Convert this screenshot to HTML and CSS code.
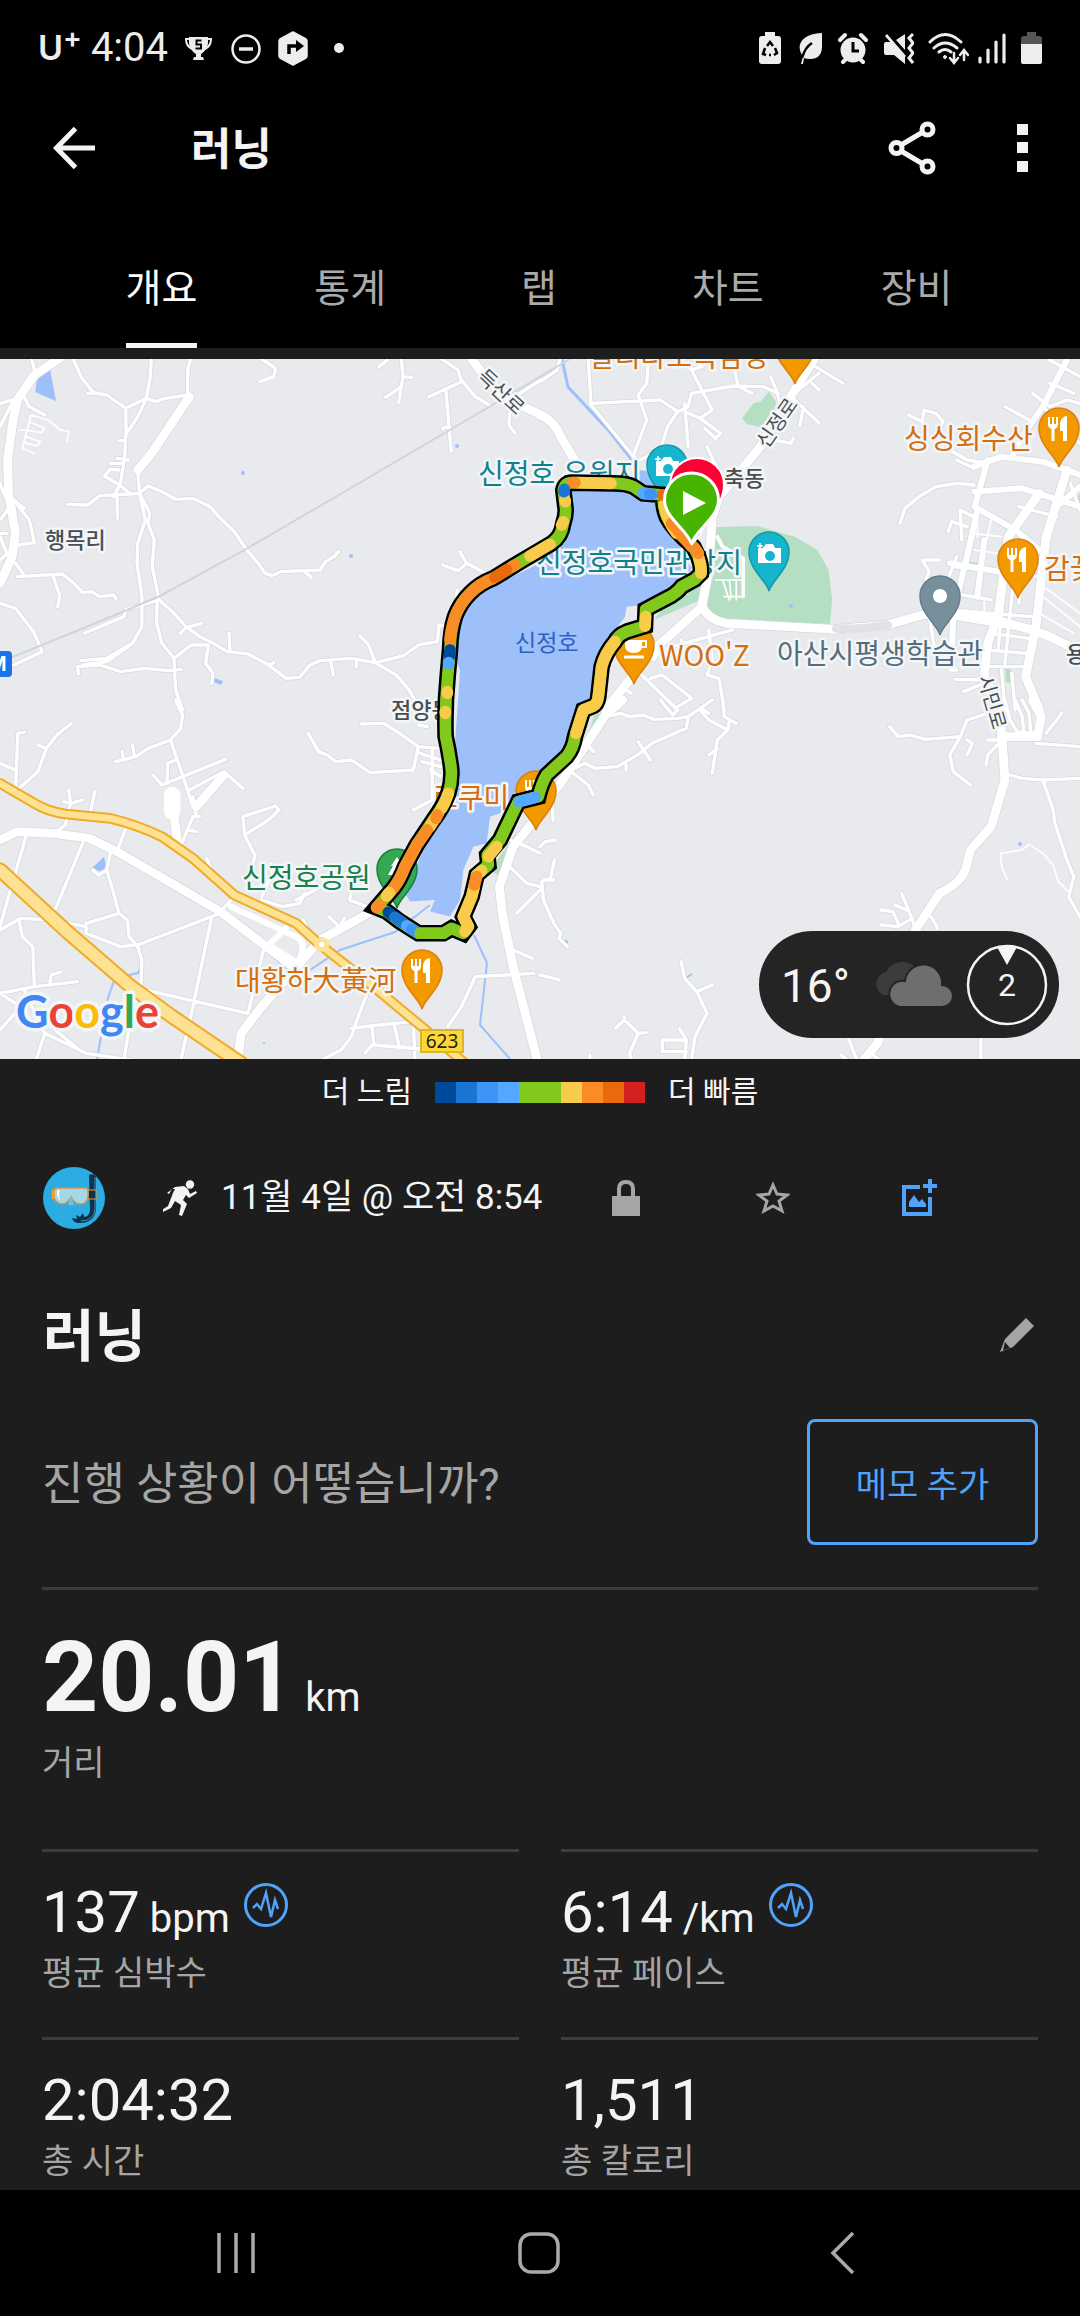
FILE: index.html
```html
<!DOCTYPE html>
<html lang="ko">
<head>
<meta charset="utf-8">
<meta name="viewport" content="width=device-width, initial-scale=1">
<title>러닝</title>
<link rel="stylesheet" href="styles.css">
</head>
<body>
<div class="app">
  <header class="top">
    <div class="status">
      <div class="status-left">
        <span class="carrier">U<span class="carrier-plus">+</span></span>
        <span class="clock">4:04</span>
        <svg class="ic-trophy" width="27" height="36" viewBox="0 0 27 36" fill="#ededed"><path d="M4 7h19v5c0 6-4 10-7 12v3h2l1 3H8l1-3h2v-3C8 22 4 18 4 12z"/><path d="M5 9H1c0 5 2 8 6 10M22 9h4c0 5-2 8-6 10" fill="none" stroke="#ededed" stroke-width="2"/><path d="M16.500 10.500h-5v4h4.500v4h-5.500" fill="none" stroke="#000" stroke-width="2"/></svg>
        <svg class="ic-dnd" width="30" height="36" viewBox="0 0 30 36" fill="none" stroke="#ededed"><circle cx="15" cy="19" r="13.500" stroke-width="2.500"/><path d="M8 19h14" stroke-width="3.500"/></svg>
        <svg class="ic-nav" width="30" height="36" viewBox="0 0 30 36"><path d="M15 2l13 7q1 1 1 2v15q0 1-1 2l-13 7-13-7q-1-1-1-2V11q0-1 1-2z" fill="#ededed" stroke="#ededed" stroke-width="1.500" stroke-linejoin="round"/><path d="M11 24v-8h8" fill="none" stroke="#000" stroke-width="3.500"/><path d="M18 10l8 6-8 6z"/></svg>
        <svg class="ic-dot" width="10" height="36" viewBox="0 0 10 36"><circle cx="5" cy="18" r="5" fill="#ededed"/></svg>
      </div>
      <div class="status-right">
        <svg class="g17" width="22" height="36" viewBox="0 0 22 36"><path d="M6 2h10v4h3q3 0 3 3v22q0 3-3 3H3q-3 0-3-3V9q0-3 3-3h3z" fill="#ededed"/><path d="M8 16l3-4 3 4M16 18l2 5-3 2M12 25l-2 0M7 25l-3-1 2-6" fill="none" stroke="#000" stroke-width="2.500"/></svg>
        <svg class="g16" width="24" height="36" viewBox="0 0 24 36"><path d="M24 3v13q0 13-12 13-4 0-6-1l-1 6H3l2-8C-2 18 1 4 24 3z" fill="#ededed"/><path d="M14 13C9 16 6 21 4 28" fill="none" stroke="#000" stroke-width="2.500"/></svg>
        <svg class="g16" width="30" height="36" viewBox="0 0 30 36"><circle cx="15" cy="20" r="12.500" fill="#ededed"/><path d="M2 10l5-5M28 10l-5-5M5 32l4-4M25 32l-4-4" stroke="#ededed" stroke-width="4" stroke-linecap="round"/><path d="M15 12v9h6" fill="none" stroke="#000" stroke-width="3"/></svg>
        <svg class="g14" width="30" height="36" viewBox="0 0 30 36"><path d="M0 14q0-2 2-2h6l13 14v8L10 25H2q-2 0-2-2zM12 10l9-6v16zM1 6l2-2 19 22-2 2z" fill="#ededed"/><path d="M29 4l-4 4 4 5-4 5 4 5-4 5 4 5" fill="none" stroke="#ededed" stroke-width="3"/></svg>
        <svg class="g9" width="41" height="36" viewBox="0 0 41 36" fill="none" stroke="#ededed" stroke-linecap="round"><path d="M2 12Q17-3 33 12M6 18q11-10 23 0M11 22q6-5 12 0" stroke-width="3"/><circle cx="17" cy="27" r="1.500" fill="#ededed" stroke-width="1"/><path d="M26 23v9m-4-4l4 5 4-5M36 30v-9m-4 4l4-5 4 5" stroke-width="2.500"/></svg>
        <svg class="g15" width="28" height="36" viewBox="0 0 28 36" stroke="#ededed" stroke-width="3.200" stroke-linecap="round"><path d="M2 28v4M10 20v12M18 12v20M26 5v27"/></svg>
        <svg width="21" height="36" viewBox="0 0 21 36"><path d="M6 2h9v4h3q3 0 3 3v5H0V9q0-3 3-3h3z" fill="#555"/><path d="M0 14h21v18q0 2-3 2H3q-3 0-3-2z" fill="#ededed"/></svg>
      </div>
    </div>
    <div class="appbar">
      <button class="iconbtn" aria-label="뒤로"><svg width="42" height="42" viewBox="0 0 42 42" fill="none" stroke="#f4f4f4" stroke-width="5"><path d="M42 21H4M22.500 1.500L3.500 21l19 19.500"/></svg></button>
      <h1 class="appbar-title">러닝</h1>
      <button class="iconbtn" aria-label="공유"><svg width="48" height="54" viewBox="0 0 48 54" fill="none" stroke="#f4f4f4" stroke-width="5"><circle cx="8.500" cy="27" r="5.500"/><circle cx="39.500" cy="8.500" r="5.500"/><circle cx="39.500" cy="45.500" r="5.500"/><path d="M13 24l22-13M13 30l22 13"/></svg></button>
      <button class="iconbtn" aria-label="더보기"><svg width="11" height="48" viewBox="0 0 11 48" fill="#f4f4f4"><path d="M0 0h11v11H0zM0 18h11v11H0zM0 37h11v11H0z"/></svg></button>
    </div>
    <nav class="tabs">
      <a class="tab active" href="#overview">개요</a>
      <a class="tab" href="#stats">통계</a>
      <a class="tab" href="#laps">랩</a>
      <a class="tab" href="#charts">차트</a>
      <a class="tab" href="#gear">장비</a>
    </nav>
  </header>

  <main>
    <section class="map">
      <svg class="map-svg" viewBox="0 359 1080 700" preserveAspectRatio="xMidYMid slice">
        <defs>
          <g id="pin"><path d="M0 39C-2 29-20 18-20 0A20 20 0 1 1 20 0C20 18 2 29 0 39z" stroke-width="1.500"/></g>
          <g id="food" fill="#f29900" stroke="#dd7f0a"><use href="#pin"/><g fill="#fff" stroke="none"><path d="M-11-11h2v7h2v-7h2v7h2v-7h2V-4q0 4-3.500 5V13h-3V1Q-11 0-11-4zM8-12V13H4V3H1V-5q1-6 7-7z"/></g></g>
          <g id="camera" fill="#15b5ce" stroke="#1497a5"><use href="#pin"/><g stroke="none"><path fill="#fff" d="M-11-4h5l3-4h7l2 4h6V11h-23z"/><circle cx="1" cy="4" r="5"/><path d="M-9-9v6m-3-3h6" stroke="#fff" stroke-width="1.500"/></g></g>
          <path id="track" d="M940 290L955 320Q965 350 963 370L945 388L905 410Q890 430 860 445L797 478L795 528L740 545Q715 555 705 575Q675 610 665 650L655 740Q652 762 640 768L610 780L585 860Q580 895 560 920L500 975Q485 1000 475 1040L415 1055L360 1170L322 1215L325 1245L290 1275L275 1340L250 1400L265 1430L250 1450L215 1435L190 1450L115 1450L60 1415L20 1385L-10 1373L40 1315Q60 1290 75 1250L110 1185L160 1110Q190 1070 205 1030Q218 990 213 950Q206 900 197 860Q194 770 203 680L210 600Q212 540 225 500Q240 460 270 430Q300 400 340 385L430 330L515 280Q545 260 550 220Q560 190 556 170L550 120Q555 98 575 98L700 100Q740 100 760 110L790 130L850 135Q848 170 860 200Q880 240 940 290"/>

          <!-- north-west quarter -->
          <g id="nw-small">
            <path d="M210 20L235 80L270 127L310 135L365 175L366 240L362 320L350 400M440 20L435 90L425 145L365 175M555 20L545 60L545 135L480 145L450 155L425 145L400 200L368 250M345 272H360M255 130H275"/>
            <path d="M340 325L372 330M320 340H355M345 360L320 358L303 378L340 400L380 432M350 400L330 440M405 430L375 432L290 437L255 465L195 463M340 440L341 505"/>
            <path d="M405 430L430 408L470 425L510 448L560 445L610 470L640 505L680 545L720 605L750 640L770 670L790 677L815 665L930 660L945 635L970 620L983 605M885 665L905 683"/>
            <path d="M50 680L180 672L215 700L240 728L265 725L290 740L330 735L337 747M155 680L173 735L168 770M45 640L70 675M0 760L45 775L75 815L100 850L122 905L40 945M245 850L360 800L365 778L462 750"/>
            <path d="M462 750L500 785L540 830L580 860L615 878L660 905L720 912L780 945L830 985L870 982L900 945L930 932L1020 925L1090 938L1170 918L1215 885L1270 875L1275 825L1290 828M585 820L540 833L523 850M665 850L668 905M780 945L795 938M960 935L968 975M1035 930V950"/>
            <path d="M1045 857L1070 885L1090 938L1150 975L1185 1015L1205 1050M456 760L455 820L470 880L505 925L510 1020L530 1080M228 972L225 950L290 945L350 965L420 955L490 962L525 958M505 925L555 885L605 885L597 940L618 970L615 1000"/>
            <path d="M0 160L35 150M0 230L40 150M70 140L85 170L130 195M70 475L40 450L85 510L100 578L55 585M0 400L15 440M0 510L30 470M0 550H20M0 560L20 610M0 630L45 590M90 20L100 60"/>
            <path d="M1100 50L1125 30M1165 20L1170 80L1165 110L1120 142M1165 110L1158 158M1170 80L1195 82M1280 25L1330 60L1340 95L1245 140M1295 125L1310 305M1285 235L1305 230M1340 90L1380 140L1420 165M1480 190L1478 225L1495 250M1510 130L1570 90M1285 645L1330 662L1355 640L1410 670M1335 605L1355 640M1328 720L1325 740M750 20L800 55L795 80L755 95"/>
            <path d="M400 360L405 430L422 510L400 580L398 640L412 740L412 830L385 880L310 925L235 932M405 430L435 490L430 520L448 570L442 650L462 750M385 880L310 935L240 945"/>
          </g>
          <path id="nw-big" d="M180 20L100 75L50 150L35 230L22 330L25 430L45 550L35 620L0 700M550 140L440 310L400 360M1365 20L1400 70L1470 145L1570 195"/>

          <!-- north-east quarter -->
          <g id="ne-small">
            <path d="M140 20L148 165L280 330M148 160L350 150L400 185L430 170L440 130L560 108L650 110L690 130M315 30L310 100L285 135L310 210L270 320M400 20L440 60L500 180L465 205M440 20L470 50L440 60M565 60L575 108L615 130M0 95L50 60L60 20"/>
            <path d="M400 185L370 230L350 300L290 330M420 160L430 290M430 190L465 205L525 250L510 265L478 235M485 290L520 370M670 80L690 130L700 180M740 150L780 190L810 218M755 225L765 170M800 50L880 100M790 100L810 120M750 120L810 70M680 270L730 280L735 265"/>
            <path d="M1480 30L1568 80M1460 170L1568 280M1350 170L1420 210M1430 130L1480 170L1530 150L1568 160M1480 100L1550 130M1070 195L1110 215L1115 180L1150 190L1170 215L1160 240L1190 300L1240 330L1300 340M1210 330L1260 355M1045 520L1060 475L1100 440L1150 410L1210 400L1260 405"/>
            <path d="M1260 500L1220 480L1225 570M1195 515L1240 530M1185 545L1195 515M1200 650L1450 680M1210 620L1180 700M1110 630L1130 665L1120 690M1120 630H1160M1200 730L1310 750M1190 780L1430 800M1350 680L1330 900M1375 690L1350 940M1400 690L1390 760M1310 850L1420 865M1300 900L1410 910M1300 950L1410 950M1340 960L1350 1080M1370 970L1380 1080M1400 560L1390 640M1390 470L1500 500M1540 400L1568 480M1205 988L1280 990M1230 1025L1290 1000M1130 800L1145 890M1190 960H1210"/>
            <path d="M290 970L400 1080M320 985L355 975L440 1045M350 880L300 950M560 840L350 900L330 930M420 900L410 870M490 840L500 930L485 975L520 985L535 1080M515 560L530 590L590 625L590 740M440 1045L400 1070M250 1020L265 1030"/>
          </g>
          <path id="ne-mid" d="M1530 30L1460 170L1400 260L1370 320M1260 350L1340 320L1460 335L1568 375M1300 330L1262 470L1380 540L1450 600M1262 425L1400 415L1568 470M1270 480L1240 620L1200 790L1195 940M1190 640L1330 665M1200 800L1430 840M1290 570L1270 740M1500 470L1568 410"/>
          <path id="ne-big" d="M0 195Q40 210 60 260L100 330M800 20L740 120L640 290L520 440L500 500L490 660L470 770Q490 810 540 820L860 838L1010 825L1110 795L1200 790L1290 800L1430 840L1480 860L1568 905M470 770L330 900L190 1080M1450 430L1360 560L1330 800L1300 880L1290 980L1340 1090M1530 360L1470 560L1440 830L1410 980L1450 1080"/>

          <!-- south-west quarter -->
          <g id="sw-small">
            <path d="M70 97L52 100L45 270M0 190L45 210M50 270L110 215L135 145L165 105L208 70M110 135L135 145M200 270L205 310L240 300M185 305L205 310L195 350L190 375L155 400M275 275L262 340M365 385L345 440M75 410L0 680M240 430L160 630L90 600M510 0L530 45L525 85L495 120L430 145L395 170L335 185M355 155L358 180M385 135L390 170"/>
            <path d="M495 120L515 180L535 240L560 320M445 225L470 255L655 178M485 250L487 190L510 180M550 270L650 215L705 265M560 290L570 350M528 430L560 350L580 350M545 390L570 395M710 400L705 350L800 318L810 330L780 360L710 405L740 465L735 490M895 100L925 155L950 165L975 185L1020 180L1075 218L1200 210L1215 140L1160 100L1115 70L1050 72M1215 140L1280 145M1220 160L1280 180M1225 185L1280 200M1255 150V300L1200 330M1250 210L1280 230M600 475L612 505M1215 75L1240 80M1200 405H1220M785 490L790 520L760 590M820 520L830 500M760 600L820 620L870 610L885 580M955 520L960 490M1005 520L1020 580L1015 600L1065 620M860 600L950 550"/>
            <path d="M0 690L60 655L150 660L250 680L250 700L350 740L400 735L640 640M250 670L345 640L330 580L310 510L320 460M310 510L285 525L270 510M345 640L370 660L375 710L400 740L412 780L410 850L380 950L360 1080M55 660L65 710L95 740L100 860L0 880M100 860L225 845M145 850L148 825L175 817M70 870L130 1000L250 1060L380 1080M0 880L60 920L0 990M160 990L230 1050M130 1000L105 1080M420 870L720 940M615 650L560 920L525 1080M765 750L720 940M680 590L640 635M955 650L985 680M990 675L1000 655M895 690L880 660M850 670L835 650"/>
            <path d="M1070 870L1040 950L1020 1010L990 1050L935 1080M1020 985L1100 975L1200 965L1205 1080M1080 980L1085 1030L1060 1060M1145 975L1160 1045M1085 1035L1260 1050M1300 980L1340 920L1380 830L1470 825M1470 825L1550 820M1490 750L1545 775M1480 500L1530 550L1568 560M1568 570L1500 640M1480 420L1530 440L1568 460"/>
          </g>
          <path id="sw-big" d="M0 420L50 395L150 400L260 415L340 455L640 635L850 800M690 1090L700 1000L760 920L870 790L930 720L1070 640M1568 340L1490 440L1450 560L1460 650L1490 800L1560 1080M500 280L505 340L515 430M570 320L650 225"/>
          <path id="hwy" d="M0 250L100 310Q140 335 190 342L320 355Q400 375 470 410L560 475L680 585L860 670L930 735L1090 865L1230 985L1350 1090"/>
          <path id="hwy-big" d="M0 510L200 700L380 860L500 950L700 1090"/>

          <!-- south-east quarter -->
          <g id="se-small">
            <path d="M190 50L235 40L260 50L300 45L330 58L400 55L430 50L500 0M430 50L425 85L325 130L290 160L225 200L160 205L130 190L90 210M285 125L320 180M250 195V210M350 0L385 45L400 30L370 0M530 0L535 50L570 70M550 60L545 90L515 120L500 220M465 30L490 60L545 90M470 25L490 40M515 145L490 165M90 215L140 255L155 285M135 130L155 155M35 300L38 360M0 440L15 425L45 420M42 480L30 535L5 545L10 600L40 670L60 700L55 715L80 740M10 540H40M0 825L55 840"/>
            <path d="M410 785L420 835L455 875L485 940L450 1010L440 1080M455 875L500 855M220 985L245 960L285 1000L260 1060L265 1080M245 960V950M285 1000L310 998M405 985L425 1020L355 1020L355 1055L425 1055M425 1020L420 1080M145 1065V1080M890 1000L920 1080M1280 1000L1280 1080M875 1065L890 1080M960 1060L985 1080M1015 80L1040 110L1075 105L1120 118L1220 110L1240 60L1300 40M1240 120L1255 130L1240 165M1220 110L1190 165L1200 215L1250 255M1300 120L1340 120L1300 165L1295 195M1440 130L1568 140M1470 100L1515 40M1365 225L1400 235L1460 240L1568 235M1460 240L1490 330L1495 370L1530 480L1550 530L1535 590L1568 650"/>
            <path d="M1350 0L1365 60L1385 95L1440 100M1380 0L1400 50L1405 95M1400 0L1420 40L1425 95M990 630L1025 635L1040 670M990 675L1040 680L1080 655L1050 580M1030 615L1065 630M1080 655L1090 690M1135 650L1155 685"/>
          </g>
          <path id="se-big" d="M240 0L190 45L60 250L0 320M1335 20L1350 240L1310 380L1250 450L1235 510Q1220 550 1160 580L1090 690L980 1030L940 1080M1430 0L1455 50L1445 110L1340 110"/>
        </defs>

        <rect y="359" width="1080" height="700" fill="#e8eaed"/>

        <!-- parks and water -->
        <g fill="#b5dfc2">
          <g transform="translate(540 350) scale(.3444 .3333)"><path d="M500 532L630 528L740 560L805 600L838 660L848 750L842 822L540 808L500 790L480 760L510 660zM587 205L620 160L640 155L665 125L685 155L680 200L655 225L640 232L600 222zM330 810L360 770L490 670L465 750zM1245 635L1280 640L1275 655L1245 650zM1352 950L1367 960L1365 1000L1352 995zM1568 430L1552 460L1568 470z"/></g>
          <path d="M530 820L505 870L498 875L490 870L515 835zM594 715L590 730L604 712z"/>
        </g>
        <g fill="#9dc0fb">
          <path d="M50 369L56 401L35 392L37 380zM214 678L223 681L221 685L214 682zM92 868L104 857L107 870L101 872z"/>
          <circle cx="243" cy="473" r="2"/><circle cx="351" cy="556" r="2"/><circle cx="457" cy="446" r="2"/><circle cx="264" cy="1043" r="1"/><circle cx="791" cy="606" r="2"/><circle cx="566" cy="942" r="2"/><circle cx="1020" cy="844" r="2"/>
          <path d="M638 470L655 472L660 480L664 500L640 490z"/>
          <g transform="translate(380 450) scale(.3333)"><path d="M560 100L770 130L850 150L850 220L880 270L950 300L920 400L850 440L790 465L740 470L735 500L690 560L640 660L630 760L590 860L500 960L410 1020L360 1090L330 1100L320 1180L280 1190L250 1260L240 1350L210 1400L150 1385L165 1350L90 1355L75 1330L130 1200L190 1080L220 1040L240 990L225 880L235 740L240 660L205 580L225 500L270 440L480 340L545 240L570 160z"/></g>
        </g>
        <g fill="none" stroke="#9dc0fb" stroke-width="2">
          <path d="M562 359L568 387L583 403L610 432L632 460" stroke-width="3"/>
          <path d="M310 970L340 950L395 932L430 905M474 935L487 963L480 1025L510 1059M140 969L138 973L115 978L108 998L97 1059M687 977L692 974"/>
          <path d="M224 914L290 970" stroke="#aecbe8" stroke-width="4"/>
        </g>

        <!-- roads: outline first, surface on top -->
        <g class="roads road-edge">
          <g transform="translate(0 350) scale(.3444 .3333)"><use class="minor" href="#nw-small"/><use class="major" href="#nw-big"/></g>
          <g transform="translate(540 350) scale(.3444 .3333)"><use class="minor" href="#ne-small"/><use class="middle" href="#ne-mid"/><use class="major" href="#ne-big"/></g>
          <g transform="translate(0 700) scale(.3444 .3333)"><use class="minor" href="#sw-small"/><use class="major" href="#sw-big"/></g>
          <g transform="translate(540 700) scale(.3444 .3333)"><use class="minor" href="#se-small"/><use class="major" href="#se-big"/></g>
        </g>
        <g class="roads road-face">
          <g transform="translate(0 350) scale(.3444 .3333)"><use class="minor" href="#nw-small"/><use class="major" href="#nw-big"/>
            <path class="lane" d="M90 195L140 210L175 240L200 245L195 275M90 195L65 295L100 310M85 215L130 235L120 248L75 240M78 260L118 275L108 288L72 278M55 240H78"/></g>
          <g transform="translate(540 350) scale(.3444 .3333)"><use class="minor" href="#ne-small"/><use class="middle" href="#ne-mid"/><use class="major" href="#ne-big"/>
            <path class="lane" d="M510 690H590M530 690L550 750M550 690L555 745M570 690V750M535 740H585M1250 550L1340 560M1260 600L1330 610M1450 700L1568 790M1460 740L1568 830M1450 790L1550 850M1270 490V560M1310 510L1290 600M1290 750V790"/>
            <path class="tunnel" d="M860 836Q940 838 1010 825"/></g>
          <g transform="translate(0 700) scale(.3444 .3333)"><use class="minor" href="#sw-small"/><use class="major" href="#sw-big"/><path class="lot" d="M500 285V335"/><path class="middle" d="M670 620L860 710Q895 730 865 790L780 735L830 685"/></g>
          <g transform="translate(540 700) scale(.3444 .3333)"><use class="minor" href="#se-small"/><use class="major" href="#se-big"/>
            <path class="lane" d="M1358 540Q1335 500 1337 460L1400 450L1420 433L1460 460L1490 495L1505 545L1535 575"/></g>
        </g>
        <path class="rail" d="M0 662L79 630L158 597L241 552L344 492L489 407L570 359"/>
        <g class="roads" transform="translate(0 700) scale(.3444 .3333)">
          <use href="#hwy" stroke="#f0ab27" stroke-width="32"/><use href="#hwy-big" stroke="#f0ab27" stroke-width="46"/>
          <use href="#hwy" stroke="#fde293" stroke-width="20"/><use href="#hwy-big" stroke="#fde293" stroke-width="34"/>
          <circle cx="934" cy="733" r="15" stroke="#fde293" stroke-width="14" fill="#fff"/>
        </g>

        <!-- places -->
        <use href="#food" x="1059" y="428"/><use href="#food" x="1018" y="559"/><use href="#food" x="795" y="345"/><use href="#food" x="536" y="791"/><use href="#food" x="422" y="970"/>
        <use href="#camera" x="667" y="465"/><use href="#camera" x="769" y="552"/>
        <g transform="translate(634 645)" fill="#f29900" stroke="#dd7f0a"><use href="#pin"/><path d="M-9-5H8V0Q8 8 0 8Q-9 8-9 0z" fill="#fff" stroke="none"/><path d="M8-4h4v6H8" fill="none" stroke="#fff" stroke-width="2"/><path d="M-10 12H10" stroke="#fff" stroke-width="3"/></g>
        <g transform="translate(940 596)" fill="#78909c" stroke="#607d8b"><use href="#pin"/><circle r="7" fill="#fff" stroke="none"/></g>
        <g transform="translate(397 869)" fill="#34a853" stroke="#188038"><use href="#pin"/><path d="M0-12L6-3H4L9 6H2V11H-2V6H-9L-4-3H-6z" fill="#fff" stroke="none"/></g>
        <rect y="651" x="-14" width="26" height="26" rx="4" fill="#1a73e8"/><text x="-11" y="671" class="metro">M</text>
        <g class="labels">
          <g class="poi orange">
            <text x="589" y="367">갈리다오목담당</text><text x="904" y="449">싱싱회수산</text><text x="1044" y="579">감꽃</text><text x="659" y="666">WOO'Z</text><text x="432" y="808">로쿠미</text><text x="235" y="991">대황하大黃河</text>
          </g>
          <g class="poi teal"><text x="478" y="484">신정호 유원지</text><text x="536" y="573">신정호국민관광지</text></g>
          <text class="poi slate" x="777" y="664">아산시평생학습관</text>
          <text class="poi green" x="242" y="888">신정호공원</text>
          <g class="place"><text x="45" y="548">행목리</text><text x="391" y="718">점양동</text><text x="724" y="486">축동</text><text x="1066" y="662">용</text></g>
          <g class="street"><text transform="translate(501 392) rotate(43)" y="7">득산로</text><text transform="translate(777 423) rotate(-55)" y="7">신정로</text><text transform="translate(992 702) rotate(74)" y="7">시민로</text></g>
        </g>
        <text class="lake" x="515" y="651">신정호</text>
        <rect x="421" y="1030" width="42" height="22" fill="#fdd835" stroke="#d9b62a" stroke-width="2"/><text class="shield" x="442" y="1048">623</text>

        <!-- run, coloured by pace -->
        <g class="run" transform="translate(380 450) scale(.3333)">
          <use class="run-edge" href="#track"/>
          <use href="#track" stroke="#81c91d"/>
          <path stroke="#f9cb4a" d="M957 325Q965 350 963 370M797 500L795 528M705 575Q675 610 665 650L655 740Q652 762 640 768L610 780L588 850M350 1190L325 1220M305 1262L290 1275M283 1310L275 1340L250 1400L265 1430L255 1445M196 785V790M202 725V730M205 1030Q195 1060 185 1075M175 1090L150 1130M450 318L510 283M545 225L550 215M556 155L555 150M590 98L693 100M890 250Q860 210 852 165"/>
          <path stroke="#fa8c26" d="M945 295L955 310M290 1280L283 1305M172 1095L168 1105M142 1140L110 1185L75 1250Q60 1290 40 1315L20 1338M0 1363L-10 1373M210 570Q212 540 225 500Q240 460 270 430Q300 400 340 385M405 345L395 351M585 98L578 98M935 290L875 220"/>
          <path stroke="#f9cb4a" d="M28 1328L20 1338"/>
          <path stroke="#ea690b" d="M380 360L345 382M848 135H850"/>
          <path stroke="#004a9c" d="M210 600L208 620M25 1387L35 1395"/>
          <path stroke="#1976d2" d="M45 1402L68 1418M552 125L553 118"/>
          <path stroke="#55a8ff" d="M206 638V642M465 1042L418 1055M80 1428L90 1434M790 130L800 131"/>
          <path stroke="#3f95f5" d="M95 1438L105 1444M810 132L815 133"/>
          <path stroke="#81c91d" d="M120 1450H190"/>
        </g>
        <path d="M692 544C689 532 670 512 670 485A27 27 0 1 1 724 485C724 505 705 520 700 535z" fill="#ff0033" stroke="#fff" stroke-width="2"/>
        <path d="M691.500 544C688 530 664.500 518 664.500 500A27 27 0 1 1 718.500 500C718.500 518 695 530 691.500 544z" fill="#47b400" stroke="#fff" stroke-width="3"/>
        <path d="M683 491V515L706 503z" fill="#fff"/>
        <text class="google" x="16" y="1028"><tspan fill="#4285f4">G</tspan><tspan fill="#ea4335">o</tspan><tspan fill="#fbbc05">o</tspan><tspan fill="#4285f4">g</tspan><tspan fill="#34a853">l</tspan><tspan fill="#ea4335">e</tspan></text>
      </svg>
      <div class="weather">
        <span class="temp">16°</span>
        <svg class="clouds" width="82" height="47" viewBox="0 0 82 47"><path d="M12 34A12 12 0 0 1 14 11Q20 0 32 1Q42 2 46 10L40 34z" fill="#3c3c3c"/><path d="M28 46A13 13 0 1 1 33 20A18 18 0 0 1 70 24A11 11 0 0 1 70 46z" fill="#6e6e6e" stroke="#242424" stroke-width="2"/></svg>
        <span class="wind"><svg class="wind-ring" width="82" height="82" viewBox="0 0 82 82"><circle cx="41" cy="41" r="39" fill="none" stroke="#f4f4f4" stroke-width="2.500"/><path d="M31 3Q41 0 51 3L41 21z" fill="#f4f4f4"/></svg><span>2</span></span>
      </div>
    </section>

    <div class="legend">
      <span>더 느림</span>
      <span class="scale"><i class="c1"></i><i class="c2"></i><i class="c3"></i><i class="c4"></i><i class="c5"></i><i class="c5"></i><i class="c6"></i><i class="c7"></i><i class="c8"></i><i class="c9"></i></span>
      <span>더 빠름</span>
    </div>

    <div class="meta">
      <svg class="avatar" width="62" height="62" viewBox="0 0 62 62"><circle cx="31" cy="31" r="31" fill="#2bace2"/><path d="M46 8q3-2 7 1V42Q52 56 36 56q-6 0-7-5l5 1-1-4 4 2 3-4 1 4q6-1 6-8z" fill="#0b3350"/><path d="M52 10V42Q51 54 38 54" fill="none" stroke="#5a87a5" stroke-width="1"/><path d="M45 23h8v9h-8z" fill="#0b3350" stroke="#f09a2b" stroke-width="1"/><path d="M9 23h4v9H9z" fill="#f6b01b"/><path d="M14 21H42Q45 21 45 24V30Q44 37 37 37Q32 37 28 30Q24 37 19 37Q12 36 11 30V24Q11 21 14 21z" fill="#a3d9e6" stroke="#e98e3c" stroke-width="1.500"/><path d="M14 24q1-1 3-1-2 4 0 10-3-1-3-9z" fill="#fff"/><path d="M28 28l-3 10h6z" fill="#6cc4de"/></svg>
      <div class="when">
        <svg width="34" height="36" viewBox="0 0 34 36"><circle cx="27" cy="4.500" r="4.200" fill="#f4f4f4"/><path d="M12 7L21 6l4 3 2 5 6-3 1 2-8 5-3-3-3 5 4 4-5 12-3-1 2-10-6-4-4 7-8 4-1-2 6-4 5-13 2-4-3 0-3 5-2-1z" fill="#f4f4f4"/></svg>
        <span>11월 4일 @ 오전 8:54</span>
      </div>
      <button class="action" aria-label="비공개"><svg width="28" height="36" viewBox="0 0 28 36"><path d="M0 16h28v20H0z" fill="#a5a5a5"/><path d="M7 17V9q0-7 7-7t7 7v8" fill="none" stroke="#a5a5a5" stroke-width="4"/></svg></button>
      <button class="action" aria-label="즐겨찾기"><svg width="34" height="34" viewBox="0 0 34 34"><path d="M17 4l4 9 10 1-8 6 3 10-9-5-9 5 3-10-8-6 10-1z" fill="none" stroke="#a5a5a5" stroke-width="3"/></svg></button>
      <button class="action" aria-label="사진 추가"><svg width="36" height="38" viewBox="0 0 36 38"><path d="M18 8H2V35H28V18" fill="none" stroke="#4fa3fa" stroke-width="4"/><path d="M28 0v14M21 7h14" stroke="#4fa3fa" stroke-width="4"/><path d="M7 28V23l5-7 5 7 3-3 4 5v3z" fill="#4fa3fa"/></svg></button>
    </div>

    <div class="title-row">
      <h2>러닝</h2>
      <button class="iconbtn" aria-label="편집"><svg width="36" height="36" viewBox="0 0 36 36"><path d="M27 1l8 8L14 30 1 35 6 22z" fill="#a5a5a5"/><path d="M6 25l5 6-7 2.500z" fill="#1d1d1d"/></svg></button>
    </div>

    <div class="note-row">
      <p>진행 상황이 어떻습니까?</p>
      <button class="memo">메모 추가</button>
    </div>

    <dl class="stats">
      <div class="stat hero"><dd><b>20.01</b> <span class="unit">km</span></dd><dt>거리</dt></div>
      <div class="stat"><dd>137 <span class="unit">bpm</span><svg class="pulse" width="44" height="44" viewBox="0 0 44 44" fill="none" stroke="#4fa3fa"><circle cx="22" cy="22" r="20.500" stroke-width="3"/><path d="M9 25l4-4 4 5 5-16 5 24 4-17 3 9" stroke-width="2.500"/></svg></dd><dt>평균 심박수</dt></div>
      <div class="stat"><dd>6:14 <span class="unit">/km</span><svg class="pulse" width="44" height="44" viewBox="0 0 44 44" fill="none" stroke="#4fa3fa"><circle cx="22" cy="22" r="20.500" stroke-width="3"/><path d="M9 25l4-4 4 5 5-16 5 24 4-17 3 9" stroke-width="2.500"/></svg></dd><dt>평균 페이스</dt></div>
      <div class="stat last"><dd>2:04:32</dd><dt>총 시간</dt></div>
      <div class="stat last"><dd>1,511</dd><dt>총 칼로리</dt></div>
    </dl>
  </main>

  <footer class="sysnav">
    <button class="iconbtn" aria-label="최근 앱"><svg width="40" height="42" viewBox="0 0 40 42" stroke="#aaa" stroke-width="3.500"><path d="M3 1v40M20 1v40M37 1v40"/></svg></button>
    <button class="iconbtn" aria-label="홈"><svg width="42" height="42" viewBox="0 0 42 42" fill="none" stroke="#aaa" stroke-width="3.500"><rect x="2" y="2" width="38" height="38" rx="11"/></svg></button>
    <button class="iconbtn" aria-label="이전"><svg width="26" height="42" viewBox="0 0 26 42" fill="none" stroke="#aaa" stroke-width="3.500"><path d="M24 1L4 21l20 20"/></svg></button>
  </footer>
</div>
</body>
</html>
```

FILE: styles.css
```css
* { box-sizing: border-box; }
body {
  margin: 0;
  background: #1d1d1d;
  color: #f4f4f4;
  font-family: Roboto, "Noto Sans CJK KR", sans-serif;
}
svg { display: block; flex: none; }
h1, h2, p, dl, dd { margin: 0; }
button { font: inherit; color: inherit; background: none; border: 0; padding: 0; }
.iconbtn { display: flex; align-items: center; justify-content: center; }

.app { min-height: 100vh; display: flex; flex-direction: column; }

/* system status bar */
.top { background: #000; }
.status { display: flex; justify-content: space-between; height: 97px; padding: 0 38px 2px; }
.status-left, .status-right { display: flex; align-items: center; }
.carrier { display: flex; font: 600 34px/38px Inter, sans-serif; color: #ededed; }
.carrier-plus { font-size: 28px; line-height: 18px; }
.clock { margin-left: 9px; font-size: 40px; line-height: 36px; color: #ededed; }
.ic-trophy { margin-left: 17px; }
.ic-dnd { margin-left: 19px; }
.ic-nav { margin-left: 17px; }
.ic-dot { margin-left: 26px; }
.g17 { margin-right: 17px; }
.g16 { margin-right: 16px; }
.g15 { margin-right: 15px; }
.g14 { margin-right: 14px; }
.g9 { margin-right: 9px; }

/* app bar */
.appbar { display: flex; align-items: center; height: 102px; padding: 0 52px 0 53px; }
.appbar-title { flex: 1; margin-left: 96px; padding-top: 4px; font-size: 44px; line-height: 60px; font-weight: 700; }
.appbar .iconbtn + .iconbtn { margin-left: 81px; }

.tabs { display: grid; grid-template-columns: repeat(5, 1fr); padding: 0 69px 0 67px; height: 149px; }
.tab {
  justify-self: center;
  padding-top: 60px;
  font-size: 39px;
  line-height: 60px;
  color: #aaa;
  text-decoration: none;
}
.tab.active { color: #fff; border-bottom: 5px solid #f4f4f4; }

/* map */
.map { position: relative; height: 700px; margin-top: 11px; overflow: hidden; }
.map-svg { width: 100%; height: 100%; }
.roads { fill: none; stroke-linecap: round; stroke-linejoin: round; }
.road-edge { stroke: #d4d7dc; }
.road-edge .minor { stroke-width: 14px; }
.road-edge .middle { stroke-width: 22px; }
.road-edge .major { stroke-width: 30px; }
.road-face { stroke: #fff; }
.road-face .minor { stroke-width: 10px; }
.road-face .middle { stroke-width: 18px; }
.road-face .major { stroke-width: 26px; }
.road-face .lane { stroke-width: 5px; }
.road-face .lot { stroke-width: 48px; }
.road-face .tunnel { stroke: #e0e2e6; stroke-width: 25px; }
.rail { fill: none; stroke: #d2d4d8; stroke-width: 2px; }
.labels text { paint-order: stroke; stroke: #f3f6f8; stroke-width: 5px; stroke-linejoin: round; }
.labels, .lake { font-family: "Noto Sans CJK KR", sans-serif; }
.poi { font-size: 28px; }
.orange { fill: #d56e0c; }
.teal { fill: #12818d; }
.slate { fill: #546e7a; }
.green { fill: #188048; }
.place { font-size: 22px; font-weight: 500; fill: #4a4e52; }
.street { font-size: 20px; fill: #4a4e52; text-anchor: middle; }
.lake { font-size: 23px; fill: #2a63c0; }
.shield { font: 19px "Noto Sans", sans-serif; fill: #222; text-anchor: middle; }
.metro { font: 700 20px Roboto, sans-serif; fill: #fff; }
.google { font: 700 45px Lato, sans-serif; paint-order: stroke; stroke: #f3f6f8; stroke-width: 7px; stroke-linejoin: round; }
.run { fill: none; stroke-width: 35px; stroke-linecap: round; stroke-linejoin: round; }
.run-edge { stroke: #000; stroke-width: 50px; stroke-linejoin: miter; }

.weather {
  position: absolute;
  right: 21px;
  bottom: 21px;
  width: 300px;
  height: 107px;
  padding: 0 11px 0 22px;
  border-radius: 54px;
  background: #242424;
  display: flex;
  align-items: center;
}
.temp { padding-top: 2px; font-size: 46px; }
.clouds { margin: 0 12px 0 auto; }
.wind { position: relative; width: 82px; height: 82px; display: grid; place-items: center; font-size: 32px; }
.wind-ring { position: absolute; inset: 0; }

.legend { display: flex; align-items: center; justify-content: center; gap: 23px; height: 65px; padding-top: 1px; font-size: 30px; line-height: 44px; }
.scale { display: flex; height: 21px; }
.scale i { width: 21px; }
.c1 { background: #004a9c; }
.c2 { background: #1976d2; }
.c3 { background: #3f95f5; }
.c4 { background: #55a8ff; }
.c5 { background: #81c91d; }
.c6 { background: #f9cb4a; }
.c7 { background: #fa8c26; }
.c8 { background: #ea690b; }
.c9 { background: #d32020; }

/* activity info */
.meta { display: flex; align-items: center; height: 148px; padding: 0 87px 0 43px; }
.when { flex: 1; display: flex; align-items: center; gap: 24px; margin-left: 58px; font-size: 35px; line-height: 50px; white-space: nowrap; }
.action { width: 147px; display: flex; justify-content: center; }

.title-row { display: flex; align-items: center; justify-content: space-between; height: 126px; padding: 0 45px 0 43px; }
.title-row h2 { padding-top: 4px; font-size: 56px; line-height: 80px; font-weight: 700; }

.note-row { display: flex; align-items: center; justify-content: space-between; padding: 21px 42px 42px; }
.note-row p { padding-top: 6px; font-size: 45px; line-height: 66px; color: #a5a5a5; }
.memo { width: 231px; height: 126px; border: 3px solid #4fa3fa; border-radius: 8px; font-size: 34px; color: #4fa3fa; }

.stats { display: grid; grid-template-columns: 1fr 1fr; column-gap: 42px; padding: 0 42px; }
.stat { display: flex; flex-direction: column; gap: 2px; border-top: 3px solid #3c3c3c; padding: 26px 0 39px; }
.stat dd { display: flex; align-items: baseline; gap: 10px; height: 68px; font-size: 58px; line-height: 68px; }
.stat dt { font-size: 34px; line-height: 50px; color: #a5a5a5; }
.hero { grid-column: 1 / -1; padding: 30px 0 61px; }
.hero dd { height: 116px; line-height: 116px; }
.hero b { font-size: 98px; }
.stat .unit { font-size: 40px; line-height: 40px; }
.pulse { align-self: flex-start; margin: 5px 0 0 4px; }
.last { padding-bottom: 0; }

.sysnav {
  margin-top: auto;
  height: 126px;
  padding: 0 86px 0 84px;
  background: #000;
  display: grid;
  grid-template-columns: repeat(3, 1fr);
}
```
